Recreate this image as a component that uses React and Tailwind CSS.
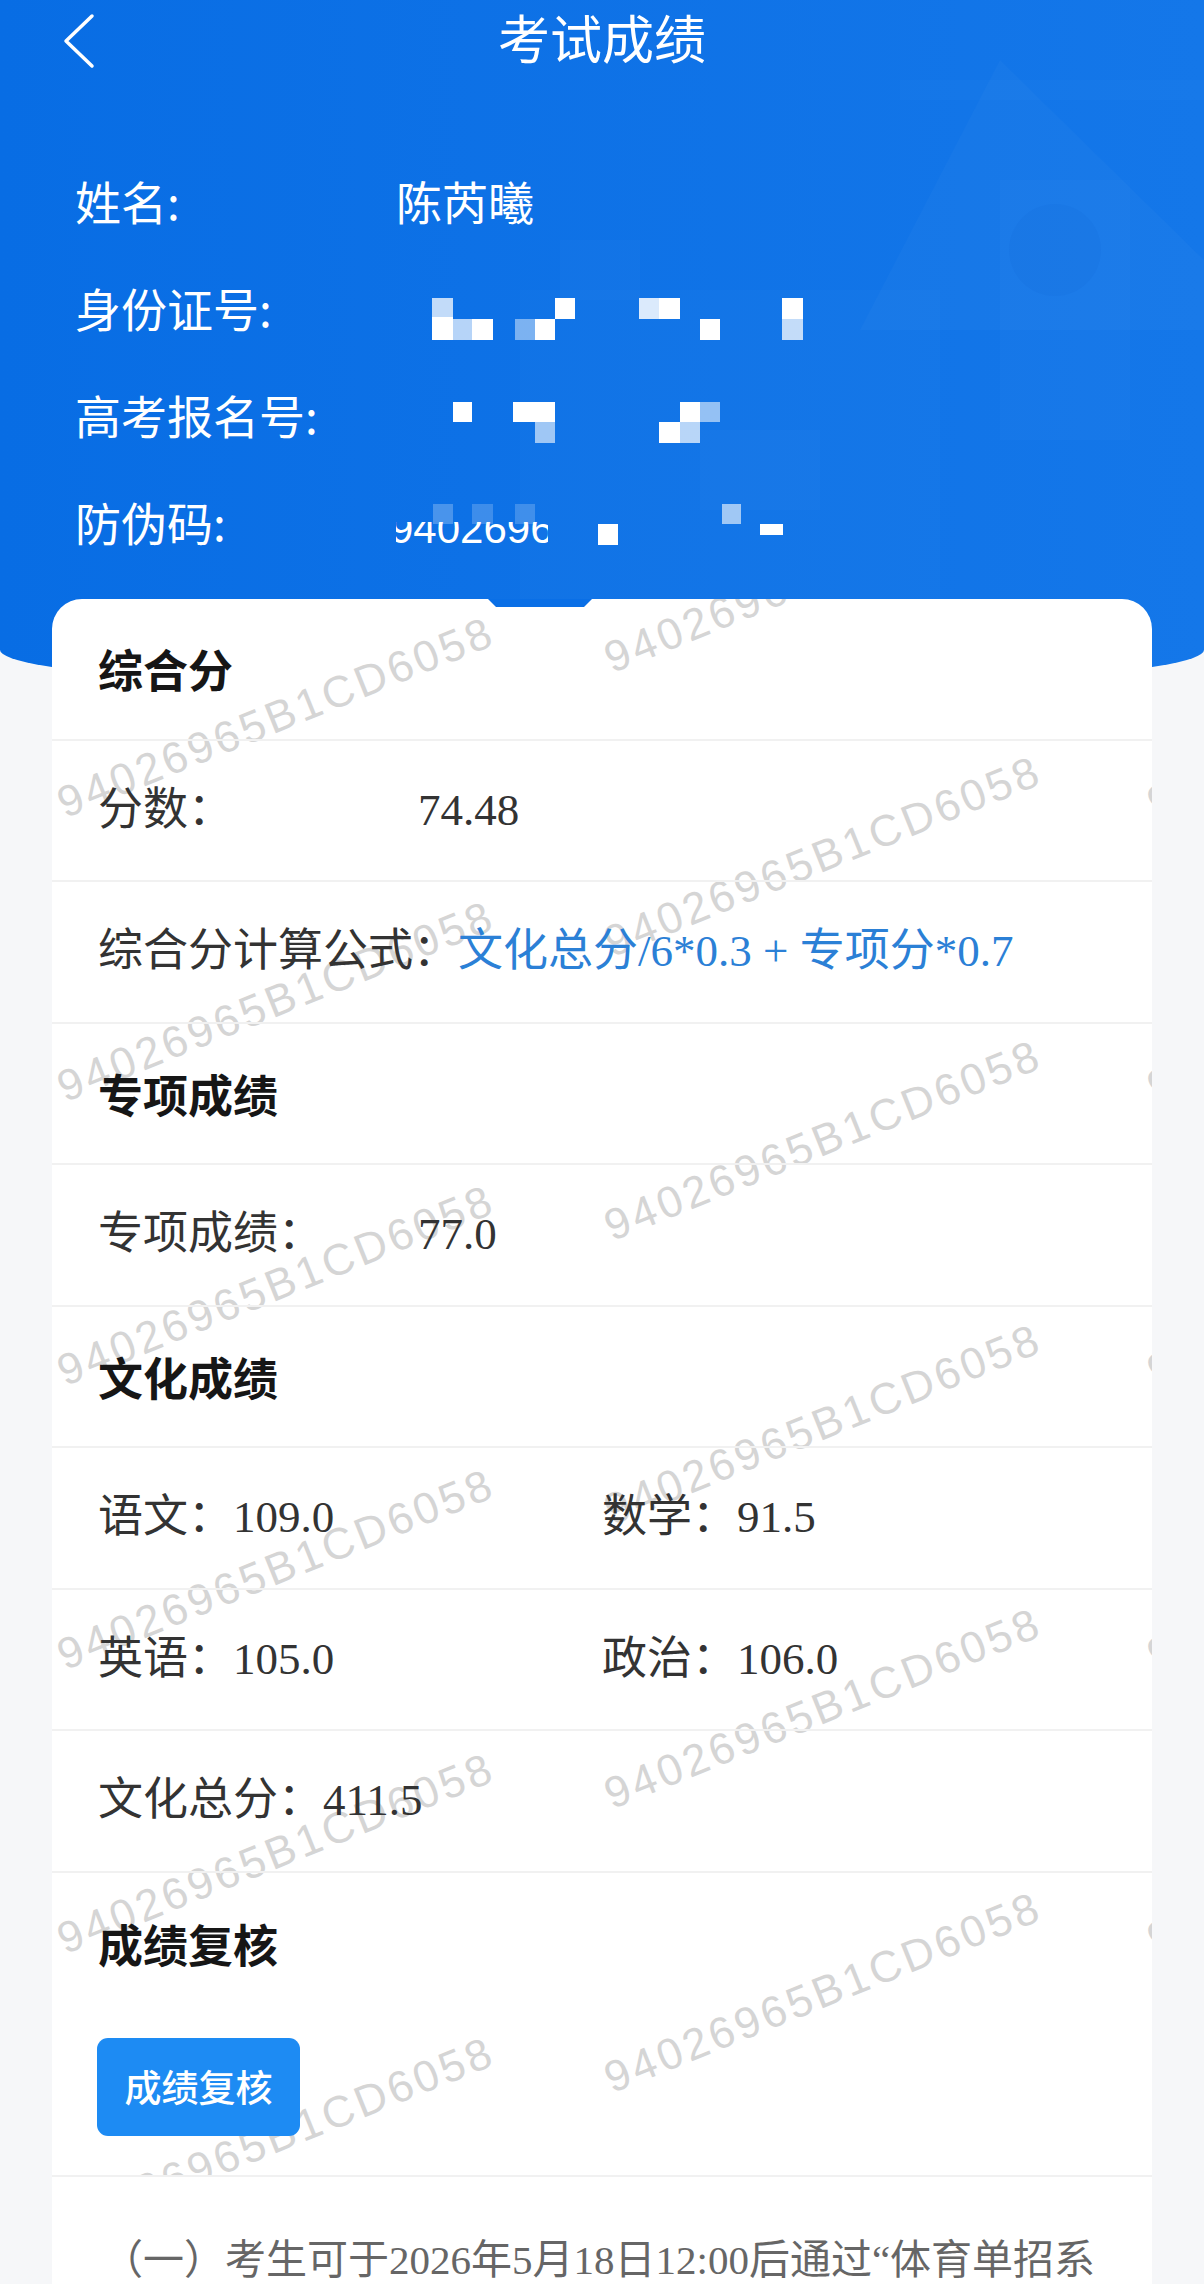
import React from "react";

const WATERMARK = "94026965B1CD6058";

// watermark grid: two staggered columns, repeated every 284px down the card
const marks = [];
for (let i = 0; i < 6; i++) {
  marks.push({ x: 224, y: 118 + 284 * i });
  marks.push({ x: 1314, y: 118 + 284 * i });
}
for (let i = 0; i < 7; i++) marks.push({ x: 771, y: -27 + 284 * i });

// pixelated (masked) values in the header: [x, y, w, h, opacity]
const idBlocks = [
  [36, 45, 21, 19, 0.75],
  [36, 64, 21, 23, 1],
  [57, 66, 19, 21, 0.7],
  [76, 66, 21, 21, 1],
  [119, 66, 20, 21, 0.45],
  [139, 66, 20, 21, 1],
  [159, 45, 20, 21, 1],
  [243, 45, 20, 21, 0.85],
  [263, 45, 21, 21, 1],
  [304, 66, 20, 21, 1],
  [386, 45, 21, 21, 1],
  [386, 66, 21, 21, 0.75],
];

const regBlocks = [
  [57, 42, 19, 20, 1],
  [117, 42, 22, 20, 1],
  [139, 42, 20, 20, 1],
  [139, 62, 20, 21, 0.6],
  [284, 42, 20, 20, 1],
  [304, 42, 20, 20, 0.55],
  [263, 62, 21, 21, 1],
  [284, 62, 20, 21, 0.7],
];

const codeBlocks = [
  [37, 37, 20, 20, 0.25],
  [76, 37, 21, 20, 0.2],
  [119, 37, 20, 20, 0.2],
  [202, 57, 20, 21, 1],
  [326, 37, 19, 20, 0.6],
  [364, 57, 23, 11, 1],
];

const Mosaic = ({ blocks, children }) => (
  <svg width="420" height="107" viewBox="0 0 420 107">
    {children}
    {blocks.map(([x, y, w, h, o], i) => (
      <rect key={i} x={x} y={y} width={w} height={h} fill="#fff" opacity={o} />
    ))}
  </svg>
);

const InfoRow = ({ label, children }) => (
  <div className="h-[107px] flex items-center">
    <div className="w-[321px] text-[46px] leading-none">{label}</div>
    <div className="flex-1 flex items-center">{children}</div>
  </div>
);

const Row = ({ children }) => (
  <div className="h-[141.5px] border-b-2 border-[#f1f1f1] flex items-center px-[46px] text-[45px] leading-none text-[#333]">
    {children}
  </div>
);

const Title = ({ children }) => (
  <Row>
    <span className="font-bold text-[#161616] font-['Noto_Sans_CJK_SC',sans-serif]">
      {children}
    </span>
  </Row>
);

const Field = ({ label, value }) => (
  <Row>
    <span className="w-[320px]">{label}</span>
    <span>{value}</span>
  </Row>
);

const App = () => {
  return (
    <div className="min-h-screen bg-[#f6f7f9] font-['Liberation_Serif','Noto_Sans_CJK_SC',serif]">
      <header className="relative h-[692px] overflow-hidden rounded-b-[50%_42px] bg-gradient-to-r from-[#086de4] to-[#1477e9] text-white font-['Noto_Sans_CJK_SC',sans-serif]">
        {/* faint building illustration */}
        <svg
          className="absolute inset-0 pointer-events-none"
          width="1204"
          height="692"
          viewBox="0 0 1204 692"
        >
          <polygon points="860,330 1000,60 1204,260 1204,330" fill="#fff" opacity="0.025" />
          <rect x="1000" y="180" width="130" height="260" fill="#fff" opacity="0.02" />
          <circle cx="1055" cy="250" r="46" fill="#0550c0" opacity="0.07" />
          <rect x="900" y="80" width="304" height="20" fill="#fff" opacity="0.015" />
          <rect x="520" y="290" width="420" height="320" fill="#fff" opacity="0.015" />
          <rect x="560" y="240" width="80" height="60" fill="#fff" opacity="0.02" />
          <rect x="700" y="430" width="120" height="80" fill="#fff" opacity="0.02" />
        </svg>

        <div className="relative h-[74px] flex items-center justify-center">
          <button className="absolute left-[62px] top-[13px]">
            <svg width="34" height="56" viewBox="0 0 34 56" fill="none">
              <polyline
                points="30,3 4,28 30,53"
                stroke="#fff"
                strokeWidth="3.5"
                strokeLinecap="round"
                strokeLinejoin="round"
              />
            </svg>
          </button>
          <h1 className="text-[52px] leading-none">考试成绩</h1>
        </div>

        <div className="relative pt-[72px] pl-[75px]">
          <InfoRow label="姓名:">
            <span className="text-[46px] leading-none">陈芮曦</span>
          </InfoRow>
          <InfoRow label="身份证号:">
            <Mosaic blocks={idBlocks} />
          </InfoRow>
          <InfoRow label="高考报名号:">
            <Mosaic blocks={regBlocks} />
          </InfoRow>
          <InfoRow label="防伪码:">
            <Mosaic blocks={codeBlocks}>
              <defs>
                <clipPath id="code-clip">
                  <rect x="0" y="55" width="152" height="26" />
                </clipPath>
              </defs>
              <text
                x="-6"
                y="76"
                fontSize="42"
                fill="#fff"
                fontFamily="Liberation Sans, sans-serif"
                clipPath="url(#code-clip)"
              >
                94026965
              </text>
            </Mosaic>
          </InfoRow>
        </div>
      </header>

      <main className="relative -mt-[93px] mx-[52px] rounded-t-[30px] bg-white overflow-hidden">
        <svg className="absolute left-[436px] top-0" width="104" height="9" viewBox="0 0 104 9">
          <polygon points="0,0 104,0 96,8 8,8" fill="#0a6fe6" />
        </svg>

        <div className="relative">
          {/* watermark layer */}
          <div className="absolute inset-0 overflow-hidden pointer-events-none">
            {marks.map((m, i) => (
              <span
                key={i}
                className="absolute -translate-x-1/2 -translate-y-1/2 -rotate-[22deg] whitespace-nowrap text-[44px] leading-none tracking-[3.5px] text-[#d5d5d5] font-['Liberation_Sans',sans-serif]"
                style={{ left: m.x, top: m.y }}
              >
                {WATERMARK}
              </span>
            ))}
          </div>

          <div className="relative">
            <Title>综合分</Title>
            <Field label="分数：" value="74.48" />
            <Row>
              <span>综合分计算公式：</span>
              <span className="text-[#2b80d6]">文化总分/6*0.3 + 专项分*0.7</span>
            </Row>

            <Title>专项成绩</Title>
            <Field label="专项成绩：" value="77.0" />

            <Title>文化成绩</Title>
            <Row>
              <div className="grid grid-cols-2 w-full">
                <span>语文：109.0</span>
                <span>数学：91.5</span>
              </div>
            </Row>
            <Row>
              <div className="grid grid-cols-2 w-full">
                <span>英语：105.0</span>
                <span>政治：106.0</span>
              </div>
            </Row>
            <Row>
              <span>文化总分：411.5</span>
            </Row>

            <div className="border-b-2 border-[#f1f1f1] px-[46px] pt-[48px] pb-[39px]">
              <div className="text-[45px] leading-none font-bold text-[#161616] font-['Noto_Sans_CJK_SC',sans-serif]">
                成绩复核
              </div>
              <button className="mt-[72px] -ml-px w-[203px] h-[98px] rounded-[11px] bg-[#1d8bf3] text-white text-[37px] font-medium font-['Noto_Sans_CJK_SC',sans-serif]">
                成绩复核
              </button>
            </div>
          </div>
        </div>

        <div className="relative bg-white pl-[50px] pr-[40px] pt-[47px] pb-[60px] text-[41px] leading-[1.8] text-[#666]">
          <p>
            （一）考生可于2026年5月18日12:00后通过“体育单招系统”申请成绩复核，逾期不予受理。
          </p>
          <p>
            （二）成绩复核仅限核查各科目是否有漏评、分数累计及登记是否有误，不重新评阅。
          </p>
        </div>
      </main>
    </div>
  );
};

export default App;
